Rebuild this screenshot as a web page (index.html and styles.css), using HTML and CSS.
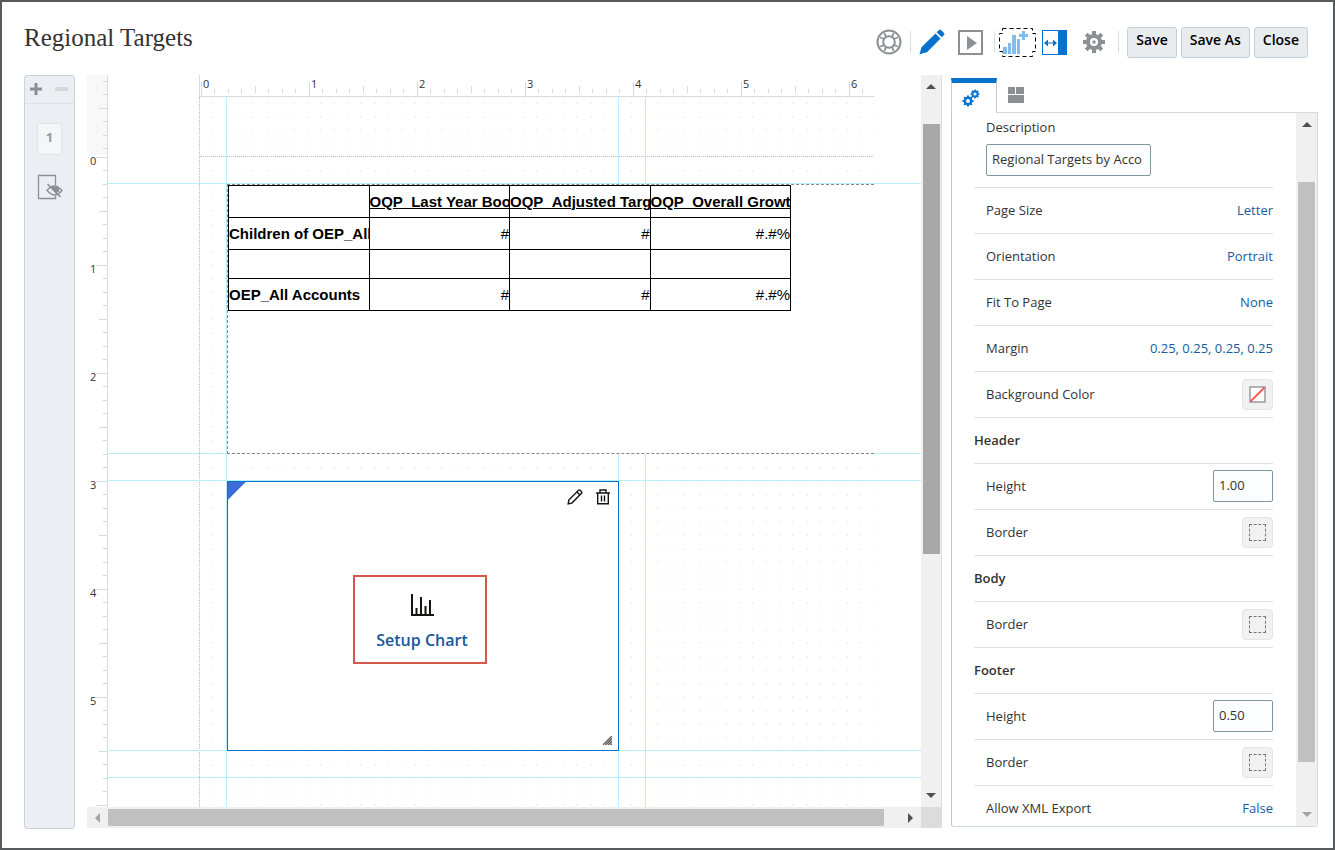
FILE: index.html
```html
<!DOCTYPE html>
<html lang="en">
<head>
    <meta charset="UTF-8">
    <meta name="viewport" content="width=device-width, initial-scale=1">
    <title>Regional Targets</title>
    <link rel="stylesheet" href="styles.css">
</head>
<body>
<header class="top">
    <h1>Regional Targets</h1>
    <div class="tools">
        <button class="icon" aria-label="Help">
            <svg width="26" height="26" viewBox="0 0 26 26" fill="none" stroke="#8b9094">
                <circle cx="13" cy="13" r="11.500" stroke-width="2"/>
                <circle cx="13" cy="13" r="5.800" stroke-width="2"/>
                <path d="M8.500 4l1.500 4.500M17.500 4L16 8.500M4 8.500L8.500 10M4 17.500L8.500 16M8.500 22l1.500-4.500M17.500 22L16 17.500M22 8.500L17.500 10M22 17.500L17.500 16" stroke-width="1.800"/>
            </svg>
        </button>
        <i class="line"></i>
        <button class="icon" aria-label="Edit">
            <svg width="26" height="26" viewBox="0 0 26 26" fill="#0572ce">
                <path d="M16.500 4.500l5 5L8 23.200q-3 .4-7.500 2.300Q1.600 21 2.500 18.200z"/>
                <path d="M17.700 3.300l2.300-2.300q1-1 2 0l3 3q1 1 0 2l-2.300 2.300z"/>
            </svg>
        </button>
        <button class="icon preview" aria-label="Preview">
            <svg width="25" height="25" viewBox="0 0 25 25">
                <rect x="1" y="1" width="23" height="23" fill="#fff" stroke="#8b9094" stroke-width="2"/>
                <path d="M9 6v14l10-7z" fill="#8b9094"/>
            </svg>
        </button>
        <i class="line"></i>
        <button class="icon" aria-label="Insert chart">
            <svg width="37" height="29" viewBox="0 0 37 29">
                <path d="M3.500.5h30v5h3v18h-3v5h-30v-5h-3v-18h3z" fill="none" stroke="#000" stroke-dasharray="4 3"/>
                <g fill="#85bbe9">
                    <path d="M4 19h4v7H4zM9 15h3v11H9zM13 7h4v19h-4zM18 11h3v15h-3z"/>
                    <path d="M23 3h3v3h3v3h-3v3h-3V9h-3V6h3z"/>
                </g>
            </svg>
        </button>
        <button class="icon split" aria-label="Toggle panel">
            <svg width="25" height="25" viewBox="0 0 25 25">
                <rect x=".5" y=".5" width="24" height="24" fill="#fff" stroke="#0572ce"/>
                <path d="M16 0h9v25h-9z" fill="#0572ce"/>
                <path d="M2 13l4-3.500v3h5v-3l4 3.500-4 3.500v-3H6v3z" fill="#0572ce"/>
            </svg>
        </button>
        <button class="icon settings" aria-label="Settings">
            <svg width="24" height="24" viewBox="0 0 24 24">
                <g stroke="#8b9094" stroke-width="4">
                    <path d="M12 1v22M1 12h22M4.200 4.200l15.600 15.600M19.800 4.200L4.200 19.800"/>
                </g>
                <circle cx="12" cy="12" r="8" fill="#8b9094"/>
                <circle cx="12" cy="12" r="4" fill="#fff"/>
                <circle cx="12" cy="12" r="1.700" fill="#8b9094"/>
            </svg>
        </button>
        <i class="line"></i>
        <div class="buttons">
            <button class="btn">Save</button>
            <button class="btn">Save As</button>
            <button class="btn">Close</button>
        </div>
    </div>
</header>

<main>
    <aside class="rail">
        <div class="rail-head">
            <button class="icon" aria-label="Add page">
                <svg width="12" height="12" viewBox="0 0 12 12" fill="#8b9094"><path d="M4.500 0h3v4.500H12v3H7.500V12h-3V7.500H0v-3h4.500z"/></svg>
            </button>
            <button class="icon" aria-label="Remove page">
                <svg width="13" height="12" viewBox="0 0 13 12" fill="#d3d7da"><path d="M0 4h13v4H0z"/></svg>
            </button>
        </div>
        <button class="page-no">1</button>
        <button class="icon" aria-label="Hidden page">
            <svg width="26" height="26" viewBox="0 0 26 26" fill="none" stroke="#8b9094">
                <path d="M18.500 11V1.500h-17v23h17V22" stroke-width="1.300"/>
                <path d="M10 16.500q7-9 15 0q-7 9-15 0z" fill="#ebeff3" stroke-width="1.300"/>
                <path d="M13.500 12.500h8l1 5-4 2z" fill="#8b9094" stroke="none"/>
                <path d="M10.500 10l13 13" stroke-width="1.600"/>
            </svg>
        </button>
    </aside>

    <section class="editor">
        <div class="ruler-v">
            <div class="ruler-head"><div class="inch-v"></div></div>
            <div class="inch-v"><span>0</span></div>
            <div class="inch-v"><span>1</span></div>
            <div class="inch-v"><span>2</span></div>
            <div class="inch-v"><span>3</span></div>
            <div class="inch-v"><span>4</span></div>
            <div class="inch-v"><span>5</span></div>
            <div class="inch-v"></div>
        </div>
        <div class="view">
            <div class="page">
                <div class="ruler-h">
                    <div class="inch-h">0</div>
                    <div class="inch-h">1</div>
                    <div class="inch-h">2</div>
                    <div class="inch-h">3</div>
                    <div class="inch-h">4</div>
                    <div class="inch-h">5</div>
                    <div class="inch-h">6</div>
                </div>
                <div class="paper"><div class="paper-head"></div></div>
            </div>

            <!-- snap guides -->
            <i class="guide-v g1"></i>
            <i class="guide-v g2"></i>
            <i class="guide-v g3"></i>
            <i class="guide-h g4"></i>
            <i class="guide-h g5"></i>
            <i class="guide-h g6"></i>
            <i class="guide-h g7"></i>
            <i class="guide-h g8"></i>

            <div class="grid-object">
                <table>
                    <tr class="r1"><th></th><th><u>OQP_Last Year Booked</u></th><th><u>OQP_Adjusted Target</u></th><th><u>OQP_Overall Growth</u></th></tr>
                    <tr class="r1"><th>Children of OEP_All Accounts</th><td>#</td><td>#</td><td>#.#%</td></tr>
                    <tr class="r2"><th></th><td></td><td></td><td></td></tr>
                    <tr class="r1"><th>OEP_All Accounts</th><td>#</td><td>#</td><td>#.#%</td></tr>
                </table>
            </div>

            <div class="chart-object">
                <div class="chart-tools">
                    <button class="icon" aria-label="Edit chart">
                        <svg width="16" height="16" viewBox="0 0 16 16" fill="none" stroke="#161513" stroke-width="1.400">
                            <path d="M1.200 14.800l.6-3.800L11.500 1.300q.8-.6 1.600 0l1.400 1.400q.6.8 0 1.600L4.900 14.100zM10 3l2.900 2.900"/>
                        </svg>
                    </button>
                    <button class="icon" aria-label="Delete chart">
                        <svg width="14" height="16" viewBox="0 0 14 16" fill="none" stroke="#161513" stroke-width="1.400">
                            <path d="M0 4h14M4 4V1h6v3M1.700 4v10.800h10.600V4M5.500 6.500v6M8.500 6.500v6"/>
                        </svg>
                    </button>
                </div>
                <button class="setup">
                    <svg width="24" height="24" viewBox="0 0 24 24" fill="none" stroke="#161513" stroke-width="2">
                        <path d="M2 1v21h22M6.500 22v-7M11 22V4M15.500 22v-9M20 22V7"/>
                    </svg>
                    <span>Setup Chart</span>
                </button>
                <svg class="resize" width="9" height="9" viewBox="0 0 9 9" stroke="#555" fill="none" stroke-width="1.300"><path d="M0 9L9 0M2.500 9L9 2.500M5 9l4-4M7.500 9L9 7.500"/></svg>
            </div>
        </div>
        <div class="scroll-v">
            <i class="arrow up"></i>
            <i class="thumb"></i>
            <i class="arrow down"></i>
        </div>
        <div class="scroll-h">
            <i class="arrow left"></i>
            <i class="thumb"></i>
            <i class="arrow right"></i>
        </div>
        <div class="corner"></div>
    </section>

    <aside class="panel">
        <nav class="tabs">
            <button class="tab active" aria-label="Properties">
                <svg width="18" height="18" viewBox="0 0 18 18" fill="none" stroke="#0572ce">
                    <circle cx="6" cy="12" r="3.200" stroke-width="2.400"/>
                    <path d="M6 6.500v2M6 15.500v2M.5 12h2M9.500 12h2M2.100 8.100l1.500 1.500M8.400 14.400l1.500 1.500M9.900 8.100L8.400 9.600M3.600 14.400l-1.500 1.500" stroke-width="2"/>
                    <circle cx="13" cy="5" r="2.600" stroke-width="2"/>
                    <path d="M13 .5V2M13 8v1.500M8.500 5H10M16 5h1.500M9.800 1.800l1.100 1.100M15.100 7.100l1.100 1.100M16.200 1.800l-1.100 1.100M10.900 7.100L9.800 8.200" stroke-width="1.600"/>
                </svg>
            </button>
            <button class="tab" aria-label="Layout">
                <svg width="16" height="16" viewBox="0 0 16 16" fill="#8b9094"><path d="M0 0h7v7H0zM8 0h8v7H8zM0 8h16v8H0z"/></svg>
            </button>
        </nav>
        <div class="panel-body">
            <div class="props">
                <div class="desc">
                    <label for="description">Description</label>
                    <input id="description" type="text" value="Regional Targets by Acco">
                </div>
                <div class="row"><span>Page Size</span><a href="#">Letter</a></div>
                <div class="row"><span>Orientation</span><a href="#">Portrait</a></div>
                <div class="row"><span>Fit To Page</span><a href="#">None</a></div>
                <div class="row"><span>Margin</span><a href="#">0.25, 0.25, 0.25, 0.25</a></div>
                <div class="row"><span>Background Color</span>
                    <button class="swatch" aria-label="Background color">
                        <svg width="17" height="17" viewBox="0 0 17 17"><rect x="1" y="1" width="15" height="15" fill="#fff" stroke="#808488" stroke-width="1.200"/><path d="M1.500 15.500l14-14" stroke="#f55" stroke-width="1.800"/></svg>
                    </button>
                </div>
                <h2>Header</h2>
                <div class="row"><label for="headHeight">Height</label><input id="headHeight" type="text" value="1.00"></div>
                <div class="row"><span>Border</span><button class="swatch" aria-label="Header border"><i class="no-border"></i></button></div>
                <h2>Body</h2>
                <div class="row"><span>Border</span><button class="swatch" aria-label="Body border"><i class="no-border"></i></button></div>
                <h2>Footer</h2>
                <div class="row"><label for="footHeight">Height</label><input id="footHeight" type="text" value="0.50"></div>
                <div class="row"><span>Border</span><button class="swatch" aria-label="Footer border"><i class="no-border"></i></button></div>
                <div class="row"><span>Allow XML Export</span><a href="#">False</a></div>
            </div>
            <div class="scroll-v">
                <i class="arrow up"></i>
                <i class="thumb"></i>
                <i class="arrow down"></i>
            </div>
        </div>
    </aside>
</main>
</body>
</html>
```

FILE: styles.css
```css
* {
    box-sizing: border-box;
}

body {
    display: flex;
    flex-direction: column;
    height: 100vh;
    margin: 0;
    border: 2px solid #58595b;
    background: #fff;
    color: #333;
    font: 13px/18px "Open Sans", "Noto Sans", sans-serif;
    overflow: hidden;
}

button, input {
    font: inherit;
    color: inherit;
}

button {
    cursor: pointer;
}

.icon {
    display: flex;
    padding: 0;
    border: 0;
    background: none;
}

.top {
    display: flex;
    justify-content: space-between;
    height: 73px;
    padding: 0 25px 0 22px;
}

h1 {
    margin: 20px 0 0;
    color: #333;
    font: 25px/32px Georgia, "Liberation Serif", serif;
}

.tools {
    display: flex;
    align-items: center;
    height: 80px;
}

.line {
    width: 1px;
    height: 22px;
    margin: 0 8px;
    background: #d5dfe7;
}

.preview {
    margin: 0 3px 0 13px;
}

.preview + .line {
    margin-right: 4px;
}

.split {
    margin: 0 15px 0 6px;
}

.settings {
    margin-right: 4px;
}

.buttons {
    display: flex;
    gap: 4px;
}

.btn {
    height: 31px;
    padding: 0 8px 4px;
    border: 1px solid #c4ced7;
    border-radius: 3px;
    background: #e8ecee;
    color: #000;
    font-size: 14px;
    font-weight: 600;
}

main {
    display: flex;
    flex: 1;
    min-height: 0;
    padding: 0 15px 19px 22px;
}

/* page rail */
.rail {
    display: flex;
    flex-direction: column;
    align-items: center;
    width: 51px;
    margin-right: 12px;
    border: 1px solid #c9d3da;
    border-radius: 3px;
    background: #ebeff3;
}

.rail-head {
    display: flex;
    align-items: center;
    justify-content: space-between;
    align-self: stretch;
    height: 28px;
    padding: 0 6px 2px 5px;
    border-bottom: 1px solid #dbe1e7;
}

.page-no {
    width: 25px;
    height: 32px;
    margin: 19px 0;
    padding: 0 0 4px;
    border: 1px solid #e0e4e8;
    border-radius: 2px;
    background: #f5f6f8;
    color: #999;
    font-weight: bold;
}

/* editor */
.editor {
    display: grid;
    grid-template-columns: 21px minmax(0, 1fr) 20px;
    grid-template-rows: minmax(0, 1fr) 21px;
    flex: 1;
    border-right: 1px solid #d5dfe7;
    margin: 0 9px 1px 0;
}

.ruler-v {
    border-right: 1px solid #d3dce5;
    overflow: hidden;
    font-size: 11px;
}

.ruler-head {
    height: 80px;
    margin-bottom: 2px;
    background: #f8f8f8;
    overflow: hidden;
}

.ruler-head .inch-v {
    margin-top: -21px;
}

.inch-v {
    --t: linear-gradient(#d3dce5, #d3dce5);
    height: 108px;
    padding-left: 3px;
    line-height: 8px;
    background: var(--t) right 0 / 11px 1px, var(--t) right 13px / 4px 1px, var(--t) right 27px / 4px 1px,
        var(--t) right 40px / 4px 1px, var(--t) right 54px / 8px 1px, var(--t) right 67px / 4px 1px,
        var(--t) right 81px / 4px 1px, var(--t) right 94px / 4px 1px;
    background-repeat: no-repeat;
}

.ruler-h {
    display: flex;
    height: 22px;
    padding-left: 1px;
    border-left: 1px solid #d3dce5;
    border-bottom: 1px solid #d3dce5;
    overflow: hidden;
    font-size: 11px;
}

.inch-h {
    --t: linear-gradient(#d3dce5, #d3dce5);
    flex: none;
    width: 108px;
    padding-left: 2px;
    line-height: 18px;
    background: var(--t) 0 7px / 1px 14px, var(--t) 13px 14px / 1px 4px, var(--t) 27px 14px / 1px 4px,
        var(--t) 40px 14px / 1px 4px, var(--t) 54px 11px / 1px 7px, var(--t) 67px 14px / 1px 4px,
        var(--t) 81px 14px / 1px 4px, var(--t) 94px 14px / 1px 4px;
    background-repeat: no-repeat;
}

.view {
    position: relative;
    overflow: hidden;
}

.page {
    display: flex;
    flex-direction: column;
    width: 675px;
    height: 100%;
    margin-left: 91px;
}

.paper {
    --dot: radial-gradient(circle at 1px 1px, #f4f4f4 1px, transparent 1px);
    flex: 1;
    border-left: 1px dotted #bbb;
    background: var(--dot) 12px 5px / 27px 27px, var(--dot) 25px 5px / 27px 27px,
        var(--dot) 12px 19px / 27px 27px, var(--dot) 25px 19px / 27px 27px;
}

.paper-head {
    height: 60px;
    border-bottom: 1px dotted #bbb;
}

/* guides and objects stand where the user dropped them on the canvas */
.guide-v, .guide-h {
    position: absolute;
    background: #b5f0fd;
}

.guide-v {
    top: 22px;
    bottom: 0;
    width: 1px;
}

.guide-h {
    left: 0;
    right: 0;
    height: 1px;
}

.g1 { left: 118px; }
.g2 { left: 510px; }
.g3 { left: 537px; }
.g4 { top: 108px; }
.g5 { top: 378px; }
.g6 { top: 405px; }
.g7 { top: 675px; }
.g8 { top: 702px; }

.grid-object {
    position: absolute;
    left: 119px;
    top: 109px;
    width: 647px;
    height: 270px;
    border: 1px dashed #888;
    border-right: 0;
    background: #fff;
}

table {
    width: 563px;
    table-layout: fixed;
    border-collapse: collapse;
    color: #000;
    font: 15px/18px "Liberation Sans", Arial, sans-serif;
}

th, td {
    padding: 0;
    border: 1px solid #000;
    overflow: hidden;
    white-space: nowrap;
}

th {
    text-align: left;
}

td {
    text-align: right;
}

.r1 {
    height: 32px;
}

.r2 {
    height: 29px;
}

.chart-object {
    position: absolute;
    left: 119px;
    top: 406px;
    display: flex;
    align-items: center;
    justify-content: center;
    width: 392px;
    height: 270px;
    border: 1px solid #0572ce;
    background: linear-gradient(135deg, #3b6cd8 12px, #fff 13px);
}

.chart-tools {
    position: absolute;
    top: 7px;
    right: 8px;
    display: flex;
    gap: 13px;
}

.setup {
    display: flex;
    flex-direction: column;
    align-items: center;
    gap: 14px;
    width: 134px;
    height: 89px;
    margin: 7px 7px 0 0;
    padding: 16px 0 0 5px;
    border: 2px solid #d4594a;
    background: #fff;
    color: #15599c;
    font-size: 16px;
    font-weight: 600;
}

.resize {
    position: absolute;
    right: 6px;
    bottom: 5px;
}

/* scrollbars */
.scroll-v {
    display: flex;
    flex-direction: column;
    align-items: center;
    width: 20px;
    background: #f0f0f0;
}

.scroll-h {
    grid-column: 1 / 3;
    display: flex;
    align-items: center;
    background: #f0f0f0;
}

.thumb {
    background: #c0c0c0;
}

.scroll-v .thumb {
    width: 17px;
}

.scroll-h .thumb {
    flex: 1;
    height: 17px;
    margin: 0 24px 0 8px;
}

.editor .scroll-v .thumb {
    height: 430px;
    margin-top: 35px;
    background: #a8a8a8;
}

.panel .scroll-v .thumb {
    height: 580px;
    margin-top: 55px;
}

.arrow {
    border: 5px solid transparent;
}

.up {
    margin-top: 4px;
    border-bottom-color: #505050;
}

.down {
    margin: auto 0 4px;
    border-top-color: #505050;
}

.panel .down {
    border-top-color: #a3a3a3;
}

.left {
    margin-left: 3px;
    border-right-color: #a3a3a3;
}

.right {
    margin-right: 3px;
    border-left-color: #505050;
}

.corner {
    background: #dcdcdc;
}

/* properties panel */
.panel {
    display: flex;
    flex-direction: column;
    width: 367px;
    padding: 3px 0 2px;
}

.tabs {
    display: flex;
}

.tab {
    display: flex;
    align-items: center;
    justify-content: center;
    width: 38px;
    height: 34px;
    padding: 0;
    border: 0;
    background: none;
}

.tab.active {
    width: 46px;
    height: 35px;
    margin-bottom: -1px;
    padding-right: 6px;
    border: 1px solid #c5cbd0;
    border-top: 5px solid #0572ce;
    border-bottom: 0;
    background: #fff;
    z-index: 1;
}

.panel-body {
    display: flex;
    flex: 1;
    min-height: 0;
    border: 1px solid #d0dae2;
    border-left-color: #c5c5c5;
    border-radius: 0 0 3px 3px;
    overflow: hidden;
}

.props {
    flex: 1;
    padding: 0 23px 0 22px;
}

.panel .scroll-v {
    width: 21px;
}

.desc {
    display: flex;
    flex-direction: column;
    align-items: flex-start;
    gap: 8px;
    height: 75px;
    padding: 5px 12px 0;
    border-bottom: 1px solid #e1e1e1;
}

input {
    width: 60px;
    height: 32px;
    padding: 0 5px 2px;
    border: 1px solid #7f97a4;
    border-radius: 2px;
    background: #fcfdfe;
}

.desc input {
    width: 165px;
}

.row {
    display: flex;
    align-items: center;
    justify-content: space-between;
    height: 46px;
    padding: 0 0 1px 12px;
    border-bottom: 1px solid #e1e1e1;
}

h2 {
    height: 46px;
    margin: 0;
    border-bottom: 1px solid #e1e1e1;
    font-size: 13px;
    font-weight: 600;
    line-height: 44px;
}

a {
    color: #145c9e;
    text-decoration: none;
}

.swatch {
    display: flex;
    align-items: center;
    justify-content: center;
    width: 31px;
    height: 31px;
    padding: 0;
    border: 1px solid #e4e4e4;
    border-radius: 4px;
    background: #f1f1f1;
}

.no-border {
    width: 17px;
    height: 17px;
    border: 1px dashed #777;
}
```
